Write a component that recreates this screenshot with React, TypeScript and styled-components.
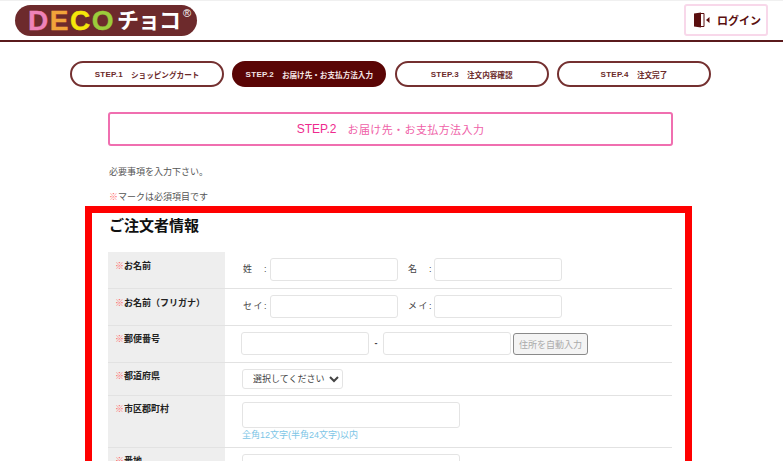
import styled, { createGlobalStyle } from 'styled-components'

const JP = `"Liberation Sans", "Noto Sans CJK JP", sans-serif`

const GlobalStyle = createGlobalStyle`
  html, body {
    margin: 0;
    padding: 0;
    height: 461px;
    overflow: hidden;
    background: #fff;
    font-family: ${JP};
    color: #444;
  }
  * { box-sizing: border-box; }
`

const steps = [
  { no: 'STEP.1', label: 'ショッピングカート' },
  { no: 'STEP.2', label: 'お届け先・お支払方法入力', active: true },
  { no: 'STEP.3', label: '注文内容確認' },
  { no: 'STEP.4', label: '注文完了' },
]

const App = () => (
  <Page>
    <GlobalStyle />
    <Header>
      <Logo>
        <LogoLetter $color="#ee82b8">D</LogoLetter>
        <LogoLetter $color="#f2a33a">E</LogoLetter>
        <LogoLetter $color="#f5e60a">C</LogoLetter>
        <LogoLetter $color="#9ccb3b">O</LogoLetter>
        <LogoKana>チョコ</LogoKana>
        <LogoMark>®</LogoMark>
      </Logo>
      <LoginButton>
        <svg width="17" height="16" viewBox="0 0 17 16">
          <path d="M1 1.5 L8 0.5 V15.5 L1 14.5 Z" fill="#5a0f0f" />
          <path d="M8 1.5 H11 V14.5 H8" fill="none" stroke="#5a0f0f" strokeWidth="1" />
          <path d="M16.5 5 V11 L13 8 Z" fill="#5a0f0f" />
        </svg>
        ログイン
      </LoginButton>
    </Header>

    <StepNav>
      {steps.map((s) => (
        <StepPill key={s.no} $active={s.active}>
          <StepNo>{s.no}</StepNo>
          <StepLabel>{s.label}</StepLabel>
        </StepPill>
      ))}
    </StepNav>

    <Banner>
      STEP.2<BannerLabel>お届け先・お支払方法入力</BannerLabel>
    </Banner>

    <Note>必要事項を入力下さい。</Note>
    <RequiredNote>
      <Req>※</Req>マークは必須項目です
    </RequiredNote>

    <RedFrame>
      <Title>ご注文者情報</Title>
      <FormTable>
        <Row>
          <Label $roomy>
            <Req>※</Req>お名前
          </Label>
          <Cell>
            <Prefix>姓　:</Prefix>
            <TextInput />
            <Prefix $second>名　:</Prefix>
            <TextInput />
          </Cell>
        </Row>
        <Row>
          <Label $roomy>
            <Req>※</Req>お名前（フリガナ）
          </Label>
          <Cell>
            <Prefix>セイ:</Prefix>
            <TextInput />
            <Prefix $second>メイ:</Prefix>
            <TextInput />
          </Cell>
        </Row>
        <Row>
          <Label>
            <Req>※</Req>郵便番号
          </Label>
          <Cell>
            <TextInput />
            <Dash>-</Dash>
            <TextInput />
            <AutoButton>住所を自動入力</AutoButton>
          </Cell>
        </Row>
        <Row>
          <Label>
            <Req>※</Req>都道府県
          </Label>
          <Cell $compact>
            <PrefSelect>
              <option>選択してください</option>
            </PrefSelect>
          </Cell>
        </Row>
        <Row>
          <Label>
            <Req>※</Req>市区郡町村
          </Label>
          <StackCell>
            <WideInput />
            <Hint>全角12文字(半角24文字)以内</Hint>
          </StackCell>
        </Row>
        <Row>
          <Label>
            <Req>※</Req>番地
          </Label>
          <StackCell>
            <WideInput />
          </StackCell>
        </Row>
      </FormTable>
    </RedFrame>
  </Page>
)

export default App

const Page = styled.div`
  width: 783px;
  height: 461px;
  overflow: hidden;
`

const Header = styled.header`
  height: 42px;
  border-top: 1px solid #f0f0f0;
  border-bottom: 2px solid #5a1a1c;
  padding: 3px 15px 0 15px;
  display: flex;
  justify-content: space-between;
  align-items: flex-start;
`

const Logo = styled.div`
  width: 182px;
  height: 31px;
  margin-top: 1px;
  border-radius: 16px;
  background: #6d2a2c;
  display: flex;
  align-items: center;
  padding-left: 13px;
  font-family: "Liberation Sans", "Noto Sans CJK JP", sans-serif;
  font-weight: 700;
`

const LogoLetter = styled.span<{ $color: string }>`
  font-size: 28px;
  line-height: 1;
  letter-spacing: 1.5px;
  color: ${(p) => p.$color};
  -webkit-text-stroke: 0.4px ${(p) => p.$color};
`

const LogoKana = styled.span`
  font-size: 22px;
  line-height: 1;
  color: #fff;
  margin-left: 2px;
  letter-spacing: -1px;
`

const LogoMark = styled.span`
  font-size: 11px;
  color: #fff;
  align-self: flex-start;
  margin: 2px 0 0 3px;
  font-weight: 400;
`

const LoginButton = styled.button`
  width: 84px;
  height: 32px;
  background: #fff;
  border: 2px solid #f8d8ea;
  border-radius: 3px;
  display: flex;
  align-items: center;
  gap: 7px;
  padding: 0 0 0 7px;
  color: #5a0f0f;
  font-family: ${JP};
  font-size: 11px;
  font-weight: 700;
  white-space: nowrap;
`

const StepNav = styled.nav`
  display: flex;
  gap: 8.3px;
  padding: 19px 0 0 70px;
`

const StepPill = styled.div<{ $active?: boolean }>`
  width: 154px;
  height: 26px;
  border-radius: 13px;
  border: 2px solid ${(p) => (p.$active ? '#5a0505' : '#743030')};
  background: ${(p) => (p.$active ? '#5a0505' : '#fff')};
  color: ${(p) => (p.$active ? '#f4e6e6' : '#6b2a2a')};
  display: flex;
  align-items: center;
  justify-content: center;
  font-size: 7.6px;
  font-weight: 700;
  white-space: nowrap;
`

const StepNo = styled.span`
  font-size: 8px;
  letter-spacing: 0.3px;
`

const StepLabel = styled.span`
  margin-left: 8px;
`

const Banner = styled.div`
  width: 565px;
  height: 34px;
  margin: 25px 0 0 108px;
  border: 2px solid #f06fb0;
  border-radius: 3px;
  display: flex;
  align-items: center;
  justify-content: center;
  color: #ee2a8e;
  font-size: 12px;
`

const BannerLabel = styled.span`
  margin-left: 11px;
  font-size: 11px;
  color: #ef5fa8;
  letter-spacing: 0.4px;
`

const Note = styled.p`
  margin: 19px 0 0 109px;
  font-size: 9px;
  line-height: 14px;
  color: #555;
`

const RequiredNote = styled(Note)`
  margin-top: 11px;
`

const Req = styled.span`
  color: #f66;
  font-weight: 400;
`

const RedFrame = styled.section`
  width: 607px;
  height: 300px;
  margin: 2px 0 0 85px;
  border: 7px solid #ff0000;
  padding: 0 16px;
`

const Title = styled.h2`
  margin: 0;
  height: 39px;
  padding: 3px 0 0 1px;
  font-size: 15px;
  line-height: 20px;
  font-weight: 700;
  color: #111;
`

const FormTable = styled.div`
  display: flex;
  flex-direction: column;
  width: 564px;
`

const Row = styled.div`
  display: grid;
  grid-template-columns: 117px 1fr;
  border-bottom: 1px solid #e2e2e2;
`

const Label = styled.div<{ $roomy?: boolean }>`
  background: #eeeeee;
  padding: ${(p) => (p.$roomy ? '8px' : '7px')} 7px 0;
  font-size: 9px;
  line-height: 12px;
  font-weight: 700;
  color: #222;
`

const Cell = styled.div<{ $compact?: boolean }>`
  display: flex;
  align-items: flex-start;
  padding: ${(p) => (p.$compact ? '6px 0 6px 17px' : '6px 0 7px 16px')};
  font-size: 9px;
  line-height: 23px;
  color: #444;
`

const StackCell = styled.div`
  display: flex;
  flex-direction: column;
  gap: 1px;
  padding: 6px 0 6px 17px;
`

const Prefix = styled.span<{ $second?: boolean }>`
  width: ${(p) => (p.$second ? '26px' : '27px')};
  margin-left: ${(p) => (p.$second ? '10px' : '2px')};
  letter-spacing: 1.5px;
  white-space: nowrap;
`

const TextInput = styled.input`
  display: block;
  width: 128px;
  height: 23px;
  padding: 0;
  background: #fff;
  border: 1px solid #e4e4e4;
  border-radius: 3px;
  flex: none;
`

const Dash = styled.span`
  width: 14px;
  text-align: center;
  font-weight: 700;
`

const AutoButton = styled.button`
  width: 75px;
  height: 22px;
  margin: 1px 0 0 2px;
  padding: 0;
  background: #f4f4f4;
  border: 1px solid #8a8a8a;
  border-radius: 3px;
  color: #aaa;
  font-family: ${JP};
  font-size: 9px;
  white-space: nowrap;
`

const PrefSelect = styled.select`
  width: 101px;
  height: 20px;
  padding: 0 0 0 6px;
  background: #fff;
  border: 1px solid #e4e4e4;
  border-radius: 3px;
  color: #444;
  font-family: ${JP};
  font-size: 9px;
`

const WideInput = styled(TextInput)`
  width: 218px;
  height: 26px;
`

const Hint = styled.span`
  font-size: 9px;
  line-height: 12px;
  color: #7cc5e6;
`
